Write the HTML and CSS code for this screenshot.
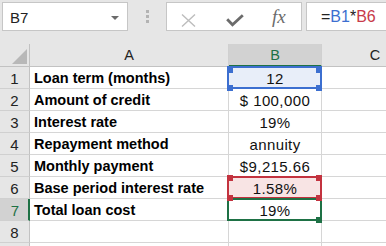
FILE: index.html
```html
<!DOCTYPE html>
<html lang="en">
<head>
  <meta charset="UTF-8">
  <title>Loan sheet</title>
  <link rel="stylesheet" href="styles.css">
</head>
<body>
  <!-- Formula bar -->
  <div class="formula-bar">
    <div class="name-box">
      <span class="name">B7</span>
      <span class="caret"></span>
    </div>
    <div class="grip"><i></i><i></i><i></i></div>
    <div class="fx-buttons">
      <svg class="icon-cancel" width="15" height="13" viewBox="0 0 15 13">
        <path d="M1 0.5 L14 12.5 M14 0.5 L1 12.5" stroke="#bdbdbd" stroke-width="1.4" fill="none"/>
      </svg>
      <svg class="icon-enter" width="18" height="13" viewBox="0 0 18 13">
        <path d="M1.2 5.2 L6.5 10.8 L16.8 1.2" stroke="#6b6b6b" stroke-width="2.8" fill="none"/>
      </svg>
      <span class="fx">fx</span>
    </div>
    <div class="formula">=<span class="ref-blue">B1</span>*<span class="ref-red">B6</span></div>
  </div>

  <!-- Sheet grid -->
  <div class="sheet">
    <div class="cell corner"><span class="tri"></span></div>
    <div class="cell col-head">A</div>
    <div class="cell col-head active">B</div>
    <div class="cell col-head">C</div>

    <div class="cell row-head">1</div>
    <div class="cell label">Loan term (months)</div>
    <div class="cell value sel-cell blue-fill">12
      <div class="frame frame-blue"><i class="h tl"></i><i class="h tr"></i><i class="h bl"></i><i class="h br"></i></div>
    </div>
    <div class="cell"></div>

    <div class="cell row-head">2</div>
    <div class="cell label">Amount of credit</div>
    <div class="cell value">$ 100,000</div>
    <div class="cell"></div>

    <div class="cell row-head">3</div>
    <div class="cell label">Interest rate</div>
    <div class="cell value">19%</div>
    <div class="cell"></div>

    <div class="cell row-head">4</div>
    <div class="cell label">Repayment method</div>
    <div class="cell value">annuity</div>
    <div class="cell"></div>

    <div class="cell row-head">5</div>
    <div class="cell label">Monthly payment</div>
    <div class="cell value">$9,215.66</div>
    <div class="cell"></div>

    <div class="cell row-head">6</div>
    <div class="cell label">Base period interest rate</div>
    <div class="cell value sel-cell red-fill">1.58%
      <div class="frame frame-red"><i class="h tl"></i><i class="h tr"></i><i class="h bl"></i><i class="h br"></i></div>
    </div>
    <div class="cell"></div>

    <div class="cell row-head active">7</div>
    <div class="cell label">Total loan cost</div>
    <div class="cell value sel-cell">19%
      <div class="frame frame-green"><i class="h br"></i></div>
    </div>
    <div class="cell"></div>

    <div class="cell row-head">8</div>
    <div class="cell label"></div>
    <div class="cell value"></div>
    <div class="cell"></div>

    <!-- row 9 is only a sliver at the bottom edge -->
    <div class="cell row-head"></div>
    <div class="cell label"></div>
    <div class="cell value"></div>
    <div class="cell"></div>
  </div>
</body>
</html>
```

FILE: styles.css
```css
/* General */
body {
  margin: 0;
  background: #e6e6e6;
  font-family: "Liberation Sans", Arial, sans-serif;
  color: #111;
  overflow: hidden;
  width: 386px;
  height: 246px;
}

/* Formula bar */
.formula-bar {
  display: flex;
  align-items: flex-start;
  height: 44px;
  padding-top: 2px;
  box-sizing: border-box;
}

.formula-bar > div {
  flex-shrink: 0;
}

.name-box,
.fx-buttons,
.formula {
  height: 29px;
  box-sizing: border-box;
  background: #fff;
  border: 1px solid #c6c6c6;
}

.name-box {
  width: 126px;
  margin-left: 2px;
  display: flex;
  align-items: center;
  justify-content: space-between;
  padding: 1px 8px 0 7px;
}

.name {
  font-size: 15px;
  color: #222;
}

.caret {
  width: 0;
  height: 0;
  border-left: 4px solid transparent;
  border-right: 4px solid transparent;
  border-top: 4px solid #6b6b6b;
  margin-top: 1px;
}

.grip {
  width: 38px;
  display: flex;
  flex-direction: column;
  align-items: center;
  gap: 2px;
  padding-top: 8px;
}

.grip i {
  display: block;
  width: 3px;
  height: 3px;
  background: #b3b3b3;
}

.fx-buttons {
  width: 136px;
  margin-right: 4px;
  display: flex;
  align-items: center;
}

.icon-cancel {
  margin-left: 14px;
  margin-top: 7px;
}

.icon-enter {
  margin-left: 30px;
  margin-top: 7px;
}

.fx {
  margin-left: 28px;
  font-family: "Liberation Serif", "Times New Roman", serif;
  font-style: italic;
  font-size: 19px;
  color: #6b6b6b;
  margin-top: 1px;
}

.formula {
  width: 200px;
  border-right: none;
  font-size: 16px;
  line-height: 27px;
  padding-left: 14px;
  color: #222;
}

.ref-blue { color: #3c6fd0; }
.ref-red { color: #c83a4a; }

/* Sheet grid */
.sheet {
  display: grid;
  grid-template-columns: 30px 199px 93px 107px;
  grid-template-rows: 23px repeat(9, 22px);
  width: 429px;
  background: #fff;
}

.cell {
  box-sizing: border-box;
  border-right: 1px solid #d6d6d6;
  border-bottom: 1px solid #d6d6d6;
  white-space: nowrap;
  font-size: 15px;
  line-height: 21px;
  padding-top: 1px;
}

.corner {
  background: #e6e6e6;
  border-color: #c2c2c2;
  display: flex;
  align-items: flex-end;
  justify-content: flex-end;
  padding: 0 2px 2px 0;
}

.tri {
  width: 0;
  height: 0;
  border-left: 15px solid transparent;
  border-bottom: 15px solid #b8b8b8;
}

.col-head {
  background: #e6e6e6;
  border-bottom-color: #c2c2c2;
  border-right-color: #d0d0d0;
  text-align: center;
  font-size: 14.5px;
  line-height: 22px;
  padding-top: 0;
  color: #222;
}

.col-head.active {
  background: #d2d2d2;
  color: #1e7145;
  border-bottom: 2px solid #1e7145;
}

.row-head {
  background: #e6e6e6;
  border-right-color: #c2c2c2;
  border-bottom-color: #d0d0d0;
  text-align: center;
  color: #222;
}

.row-head.active {
  background: #d2d2d2;
  color: #1e7145;
  border-right: 2px solid #1e7145;
  padding-left: 2px;
}

.label {
  font-weight: bold;
  font-size: 14.5px;
  padding-left: 4px;
  overflow: hidden;
  color: #000;
}

.value {
  text-align: center;
  letter-spacing: 0.4px;
  color: #111;
}

/* Selection frames */
.sel-cell {
  position: relative;
}

.blue-fill { background: #e8eef9; }
.red-fill { background: #f8e4e4; }

.frame {
  position: absolute;
  top: -1px;
  left: -2px;
  width: 95px;
  height: 23px;
  box-sizing: border-box;
  border: 2px solid;
}

.frame-blue { border-color: #3c6fd0; }
.frame-red { border-color: #c3333f; }
.frame-green { border-color: #1e7145; }

.h {
  position: absolute;
  width: 6px;
  height: 6px;
  z-index: 2;
}

.frame-blue .h { background: #3c6fd0; }
.frame-red .h { background: #c3333f; }
.frame-green .h { background: #1e7145; }

.h.tl { top: -3px; left: -2px; }
.h.tr { top: -3px; right: -2px; }
.h.bl { bottom: -4px; left: -2px; }
.h.br { bottom: -4px; right: -2px; }

.frame-blue .h.tl,
.frame-blue .h.tr { top: -1px; }
```
